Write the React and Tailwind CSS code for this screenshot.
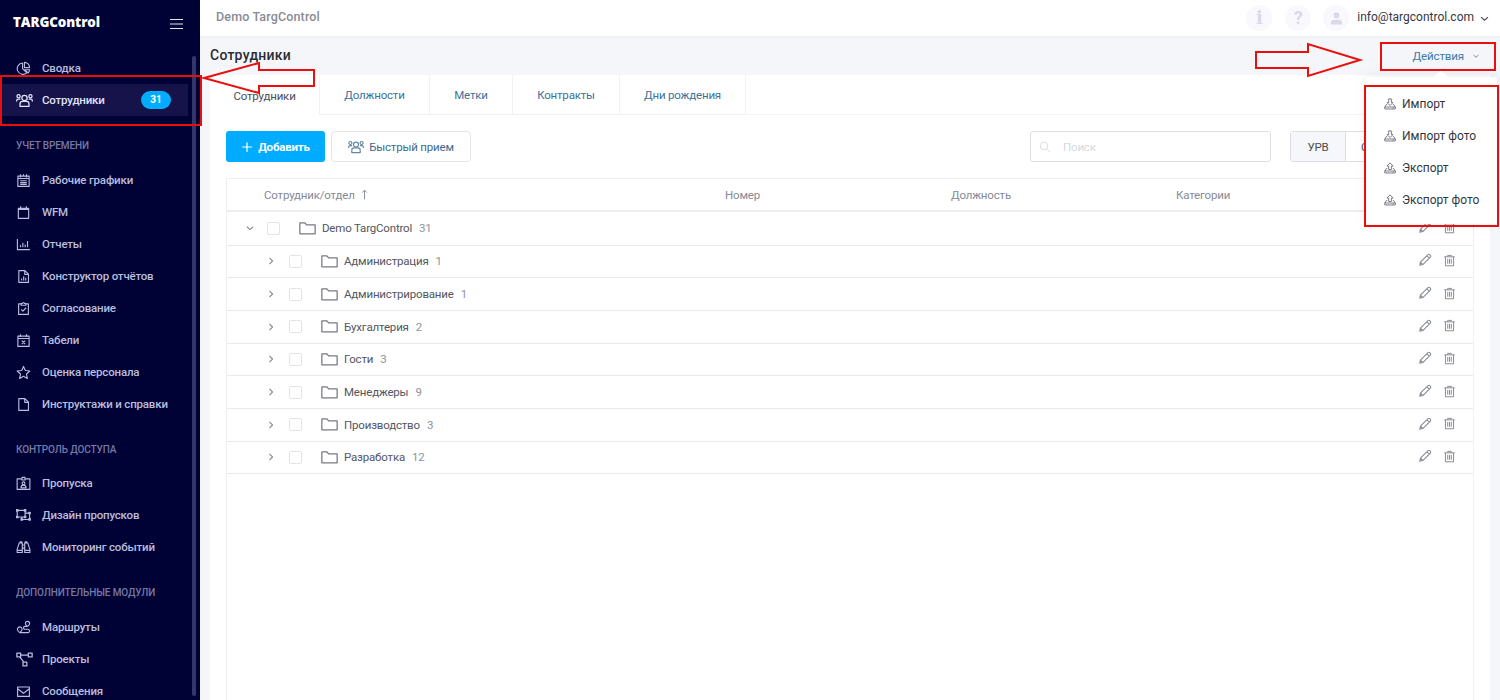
import React, { useState } from 'react';
import clsx from 'clsx';

// 16x16 line icons shared by the sidebar, the toolbar and the table
const ICONS = {
  pie: <><path d="M7 2.2A6 6 0 1 0 11.4 12.6L7 8.2z" /><path d="M9 1.5V7h5.5A5.5 5.5 0 0 0 9 1.5z" /><path d="M9.3 9.3h5.2a6 6 0 0 1-1.6 3.5z" /></>,
  users: <><circle cx="8" cy="5.6" r="2.5" /><circle cx="2.4" cy="4" r="1.5" /><circle cx="13.6" cy="4" r="1.5" /><path d="M3.8 13.6v-2.4c0-1.4.9-2.3 2.2-2.3h4c1.3 0 2.2.9 2.2 2.300v2.400zM.6 9V8.300c0-.9.7-1.600 1.600-1.600h1.900M15.400 9V8.300c0-.9-.7-1.600-1.600-1.600h-1.900" /></>,
  schedule: <path d="M2 3.3h12v11H2zM4.8 1.3v3.4M8 1.3v2M11.2 1.3v3.4M2 5.8h12M4.5 8.3h7M4.5 10.2h7M4.5 12.1h7" />,
  calendar: <path d="M2.5 3.6h11v10.6h-11zM2.5 4.6h11M5 1.4v3M11 1.4v3" />,
  chart: <path d="M1.5 2v11.500h13.300M4.800 11V8.500M7.300 11V6M9.800 11V8M12.300 11V4.200" />,
  fileChart: <path d="M3 1.7h6.5l3.8 3.8v8.8H3zM9.3 1.7v4h4M6 12.3v-2.2M8.2 12.3V7.6M10.4 12.3V9.2" />,
  clipboard: <path d="M5.5 3H2.8v11.3h10.4V3h-2.7M5.5 4.5V2.7h1.4a1.1 1.1 0 0 1 2.2 0h1.4v1.8zM5.5 9l1.8 1.8 3.5-3.6" />,
  calendarX: <path d="M2 3.3h12v11H2zM4.8 1.3v3M11.2 1.3v3M2 5.8h12M6.2 8.2l3.6 3.6M9.8 8.2l-3.6 3.6" />,
  star: <path d="M8 1.5l1.9 4.3 4.9.6-3.6 3.2.9 4.9L8 12.1l-4.1 2.4.9-4.9L1.2 6.4l4.9-.6z" />,
  file: <path d="M3 1.7h6.5l3.8 3.8v8.8H3zM9.3 1.7v4h4" />,
  badge: <><path d="M6 3H1.200v11.300h13.600V3H10M6.400 1.500h3.200v2.800H6.400z" /><circle cx="8" cy="7.7" r="1.5" /><path d="M5.3 12.7c0-2 1-3 2.7-3s2.7 1 2.7 3z" /></>,
  objects: <path d="M1.3 2.6h8.4v7H1.3zM9.7 5.4h4.8v6.8H6.2V9.6M.5 1.8h1.6v1.6H.5zM8.9 1.8h1.6v1.6H8.9zM.5 8.8h1.6v1.6H.5zM8.9 8.8h1.6v1.6H8.9zM13.7 4.6h1.6v1.6h-1.6zM13.7 11.4h1.6V13h-1.6zM5.4 11.4H7V13H5.4z" />,
  binoculars: <path d="M3.5 3.1h3.2v10.2H1.2V10zM12.5 3.1H9.3v10.2h5.5V10zM6.7 5.3h2.6M6.7 8.7h2.6M1.2 11h5.5M9.3 11h5.5M4 1.8h2.2v1.3M12 1.8H9.8v1.3" />,
  route: <><path d="M4 13.5S1.5 11.7 1.5 9.8a2.5 2.5 0 0 1 5 0C6.5 11.7 4 13.5 4 13.5zM12.3 6.8S10 5.3 10 3.7a2.3 2.3 0 0 1 4.6 0c0 1.6-2.3 3.1-2.3 3.1z" /><path d="M12.3 6.8H9.5a1.5 1.5 0 0 0 0 3h3a1.8 1.8 0 0 1 0 3.7H4M4 9.7h.2M12.3 3.6h.2" /></>,
  project: <path d="M.8 2h3.6v3.6H.8zM11.6 2h3.6v3.6h-3.6zM6.6 10.4h3.6V14H6.6zM4.4 3.8h7.2M3.4 5.6l4 4.8" />,
  mail: <path d="M1.7 3.2h12.6v10H1.7zM1.7 5l6.3 4.8L14.3 5" />,
  folder: <path d="M.8 13V2.8h4.8l1.6 1.8h8V13z" />,
  pencil: <path d="M2 14l.8-3.500 8.600-8.600c.6-.6 1.400-.6 2 0l.7.7c.6.6.6 1.400 0 2l-8.600 8.600zM10.200 3.200l2.700 2.700M2.800 10.500l2.700 2.700" />,
  trash: <path d="M1.5 3.5h13M3 3.5v11h10v-11M5.7 3.3V1.7h4.6v1.6M5.8 6v6M8 6v6M10.2 6v6" />,
  import: <path d="M6.2 1.2h3.6V6h2.3L8 10 3.900 6h2.300zM4.300 8.800H3L1 12v2.600h14V12l-2-3.200h-1.300M1 12h14M11.500 13.300h1.500" />,
  export: <path d="M6.2 10h3.6V5.400h2.300L8 1.200 3.900 5.400h2.300zM4.300 8.800H3L1 12v2.600h14V12l-2-3.200h-1.300M1 12h14M11.500 13.300h1.500" />,
  search: <><circle cx="6.7" cy="6.7" r="5" /><path d="M10.4 10.4l4.2 4.2" /></>,
  plus: <path d="M8 1.5v13M1.5 8h13" strokeWidth="1.6" />,
  down: <path d="M3 6l5 4.5L13 6" strokeWidth="1.7" />,
  right: <path d="M5.5 3l5 5-5 5" strokeWidth="1.7" />,
  up: <path d="M8 15V2M4.5 5.2L8 1.7l3.5 3.5" strokeWidth="1.4" />,
};

const Icon = ({ name, className }) => (
  <svg viewBox="0 0 16 16" fill="none" stroke="currentColor" strokeWidth="1.2" strokeLinejoin="round" className={clsx('shrink-0', className)}>
    {ICONS[name]}
  </svg>
);

const SECTIONS = [
  {
    items: [
      { icon: 'pie', label: 'Сводка' },
      { icon: 'users', label: 'Сотрудники', count: 31 },
    ],
  },
  {
    title: 'УЧЕТ ВРЕМЕНИ',
    headClass: 'h-12',
    items: [
      { icon: 'schedule', label: 'Рабочие графики' },
      { icon: 'calendar', label: 'WFM' },
      { icon: 'chart', label: 'Отчеты' },
      { icon: 'fileChart', label: 'Конструктор отчётов' },
      { icon: 'clipboard', label: 'Согласование' },
      { icon: 'calendarX', label: 'Табели' },
      { icon: 'star', label: 'Оценка персонала' },
      { icon: 'file', label: 'Инструктажи и справки' },
    ],
  },
  {
    title: 'КОНТРОЛЬ ДОСТУПА',
    headClass: 'h-[47px]',
    items: [
      { icon: 'badge', label: 'Пропуска' },
      { icon: 'objects', label: 'Дизайн пропусков' },
      { icon: 'binoculars', label: 'Мониторинг событий' },
    ],
  },
  {
    title: 'ДОПОЛНИТЕЛЬНЫЕ МОДУЛИ',
    headClass: 'h-12',
    items: [
      { icon: 'route', label: 'Маршруты' },
      { icon: 'project', label: 'Проекты' },
      { icon: 'mail', label: 'Сообщения' },
    ],
  },
];

const TABS = [
  { label: 'Сотрудники', width: 'w-[110px]' },
  { label: 'Должности', width: 'w-[110px]' },
  { label: 'Метки', width: 'w-[83px]' },
  { label: 'Контракты', width: 'w-[107px]' },
  { label: 'Дни рождения', width: 'w-[126px]' },
];

const DEPARTMENTS = [
  { name: 'Администрация', count: 1 },
  { name: 'Администрирование', count: 1 },
  { name: 'Бухгалтерия', count: 2 },
  { name: 'Гости', count: 3 },
  { name: 'Менеджеры', count: 9 },
  { name: 'Производство', count: 3 },
  { name: 'Разработка', count: 12 },
];

const ACTIONS = [
  { icon: 'import', label: 'Импорт' },
  { icon: 'import', label: 'Импорт фото' },
  { icon: 'export', label: 'Экспорт' },
  { icon: 'export', label: 'Экспорт фото' },
];

const Sidebar = () => (
  <aside className="flex h-full w-[200px] shrink-0 flex-col bg-[#000236] text-[#b9bddd]">
    <div className="flex h-[52px] shrink-0 items-start justify-between pl-[13px] pr-[17px] pt-[13px]">
      <span className="font-['Open_Sans'] text-[13.4px] font-extrabold leading-[18px] tracking-[-0.1px] text-white">TARGControl</span>
      <svg viewBox="0 0 13 12" className="mt-[5px] h-3 w-[13px]" stroke="#e4e5f2" strokeWidth="1.2">
        <path d="M0 1.5h13M0 6h13M0 10.5h13" />
      </svg>
    </div>
    <div className="flex min-h-0 flex-1">
      <nav className="w-[188px] overflow-hidden">
        {SECTIONS.map((section) => (
          <div key={section.items[0].label}>
            {section.title && (
              <div className={clsx('whitespace-nowrap pl-4 pt-[23px] text-[10px] font-medium leading-[14px] tracking-[-0.1px] text-[#7779a4]', section.headClass)}>{section.title}</div>
            )}
            {section.items.map((item) => (
              <a
                key={item.label}
                className={clsx('flex h-8 items-center pl-4 text-[11.5px] font-medium leading-[18px] tracking-[-0.18px]', item.count && 'bg-[#15134a] text-[#e0e2f8]')}
              >
                <Icon name={item.icon} className={item.icon === 'users' || item.icon === 'project' ? 'h-[17px] w-[17px]' : 'h-[15px] w-[15px]'} />
                <span className={clsx('whitespace-nowrap', item.icon === 'users' || item.icon === 'project' ? 'ml-[9px]' : 'ml-[11px]')}>{item.label}</span>
                {item.count && (
                  <span className="ml-auto mr-[17px] flex h-[18px] w-[30px] items-center justify-center rounded-full bg-[#00acff] text-[10px] font-bold tracking-normal text-white">{item.count}</span>
                )}
              </a>
            ))}
          </div>
        ))}
      </nav>
      <div className="mb-1 ml-1 mt-1 w-1 rounded-full bg-[#34376a]" />
    </div>
  </aside>
);

const RoundButton = ({ children }) => (
  <span className="flex h-[26px] w-[26px] items-center justify-center rounded-full bg-[#f8f8fd] text-[#d9d9e9]">{children}</span>
);

const TopBar = () => (
  <header className="flex h-9 shrink-0 items-center bg-white pl-4 pr-[10px] shadow-[0_0_4px_rgba(80,90,130,0.10)]">
    <span className="pb-px text-[12.5px] font-medium tracking-[0.15px] text-[#8a8b93]">Demo TargControl</span>
    <div className="ml-auto flex items-center">
      <RoundButton><span className="font-['DejaVu_Serif'] text-[18px] font-bold leading-none">i</span></RoundButton>
      <span className="w-[13px]" />
      <RoundButton><span className="text-[18px] font-bold leading-none">?</span></RoundButton>
      <span className="w-3" />
      <RoundButton>
        <svg viewBox="0 0 14 14" className="h-[13px] w-[13px]" fill="currentColor">
          <circle cx="7" cy="3.6" r="3.2" />
          <path d="M1 13.5v-2C1 9.3 3 8.3 4.5 8.3h5C11 8.3 13 9.3 13 11.5v2z" />
        </svg>
      </RoundButton>
      <span className="ml-2 pb-[2px] text-[12px] leading-[18px] text-[#37383f]">info@targcontrol.com</span>
      <Icon name="down" className="ml-[5px] h-[11px] w-[11px] text-[#4c4d55]" />
    </div>
  </header>
);

const RowActions = () => (
  <div className="mb-[2px] ml-auto flex items-center gap-[11px] pr-[17px] text-[#868a93]">
    <Icon name="pencil" className="h-[14px] w-[14px]" />
    <Icon name="trash" className="h-[13px] w-[13px]" />
  </div>
);

const Checkbox = () => <span className="h-[13px] w-[13px] rounded-[2px] border border-[#e2e4e6] bg-white" />;

const Table = () => (
  <div className="flex min-h-0 flex-1 flex-col border-x border-t border-[#eff0f2] text-[11.5px] leading-[18px] tracking-[-0.18px]">
    <div className="flex h-[33px] shrink-0 items-center border-b-2 border-[#eceef0] text-[#868a96]">
      <span className="flex w-[498px] items-center pl-[37px]">
        Сотрудник/отдел
        <Icon name="up" className="ml-1 h-[11px] w-[11px]" />
      </span>
      <span className="w-[226px]">Номер</span>
      <span className="w-[225px]">Должность</span>
      <span>Категории</span>
    </div>
    <div className="flex h-[33.5px] shrink-0 items-center border-b border-[#e8eaec] pl-[18px] text-[#53565f]">
      <Icon name="down" className="h-[10px] w-[10px] text-[#868a93]" />
      <span className="ml-3 flex"><Checkbox /></span>
      <Icon name="folder" className="ml-[19px] h-[17px] w-[17px] text-[#777b84]" />
      <span className="ml-[6px]">Demo TargControl</span>
      <span className="ml-[7px] text-[#8f929b]">31</span>
      <RowActions />
    </div>
    {DEPARTMENTS.map((dep) => (
      <div key={dep.name} className="flex h-[32.7px] shrink-0 items-center border-b border-[#e8eaec] pl-[39px] text-[#53565f]">
        <Icon name="right" className="h-[10px] w-[10px] text-[#868a93]" />
        <span className="ml-[13px] flex"><Checkbox /></span>
        <Icon name="folder" className="ml-[19px] h-[17px] w-[17px] text-[#777b84]" />
        <span className="ml-[6px]">{dep.name}</span>
        <span className="ml-[7px] text-[#8f929b]">{dep.count}</span>
        <RowActions />
      </div>
    ))}
  </div>
);

const ActionsMenu = () => (
  <div className="absolute left-[1366px] top-[77px] h-[147px] w-[131px] rounded-[3px] bg-white pt-[11px] text-[12px] leading-[18px] text-[#34363e] shadow-[0_0_12px_rgba(70,80,130,0.12)]">
    <svg viewBox="0 0 16 8" className="absolute -top-[7px] left-[67px] h-2 w-4" fill="#fff"><path d="M0 8L8 0l8 8z" /></svg>
    {ACTIONS.map((action) => (
      <div key={action.label} className="flex h-8 items-center whitespace-nowrap pl-[18px]">
        <Icon name={action.icon} className="mr-[6px] h-3 w-3 text-[#6d7078]" />
        {action.label}
      </div>
    ))}
  </div>
);

// Red frames and arrows that point at the menu entries
const Callouts = () => (
  <svg viewBox="0 0 1500 700" className="pointer-events-none absolute inset-0 h-[700px] w-[1500px]" fill="none" stroke="#ea0e0c" strokeWidth="2">
    <path d="M1 76h200v49H1z" />
    <path d="M204 78l55-15v7h55v16h-55v7z" />
    <path d="M1256 52h52v-8l52 16-52 16v-8h-52z" />
    <path d="M1381 43h114v27h-114z" />
    <path d="M1365 86h133v140h-133z" />
  </svg>
);

export default function App() {
  const [tab, setTab] = useState(0);

  return (
    <div className="relative flex h-[700px] w-[1500px] overflow-hidden bg-[#f5f6fa] font-[Roboto,sans-serif]">
      <Sidebar />
      <main className="flex min-w-0 flex-1 flex-col">
        <TopBar />
        <div className="flex h-[39px] shrink-0 items-center justify-between pl-[10px] pr-[20px]">
          <h1 className="text-[14px] font-medium tracking-[0.25px] text-[#2b2c33]">Сотрудники</h1>
          <button className="flex items-center text-[11.5px] leading-[18px] tracking-[-0.12px] text-[#3a7ba8]">
            Действия
            <Icon name="down" className="ml-2 h-2 w-2 text-[#777b84]" />
          </button>
        </div>
        <section className="mx-[10px] flex min-h-0 flex-1 flex-col bg-white">
          <div className="flex h-10 shrink-0 text-[11.5px] leading-[18px]">
            {TABS.map((t, i) => (
              <button
                key={t.label}
                onClick={() => setTab(i)}
                className={clsx(
                  'shrink-0 border-r border-[#f0f1f4] pt-px tracking-[-0.18px]',
                  t.width,
                  i === tab ? 'text-[#4b4d56]' : 'border-b text-[#3d7199]'
                )}
              >
                {t.label}
              </button>
            ))}
            <div className="flex-1 border-b border-[#f3f4f6]" />
          </div>
          <div className="flex min-h-0 flex-1 flex-col px-4 pt-4">
            <div className="flex h-[31px] shrink-0 items-center text-[11.5px] leading-[18px]">
              <button className="flex h-[31px] w-[99px] items-center justify-center rounded-[3px] bg-[#00acff] font-bold tracking-[-0.2px] text-white">
                <Icon name="plus" className="mr-[5px] h-3 w-3" />
                Добавить
              </button>
              <button className="ml-[6px] flex h-[31px] w-[140px] items-center justify-center rounded-[4px] border border-[#e3e5ea] tracking-[-0.18px] text-[#3d6a8f]">
                <Icon name="users" className="mr-[5px] h-4 w-4 text-[#6487a5]" />
                Быстрый прием
              </button>
              <div className="ml-auto flex h-[31px] w-[241px] items-center rounded-[3px] border border-[#dddfe4] pl-2 tracking-[-0.18px] text-[#d6d9e0]">
                <Icon name="search" className="mr-3 h-3 w-3" />
                Поиск
              </div>
              <div className="ml-[19px] flex h-[31px] w-[184px] overflow-hidden rounded-[3px] border border-[#dddfe4] tracking-[-0.18px] text-[#4b4d56]">
                <span className="flex w-[55px] items-center justify-center border-r border-[#dddfe4] bg-[#f5f7fa]">УРВ</span>
                <span className="flex items-center pl-[15px]">СКУД</span>
              </div>
            </div>
            <div className="h-4 shrink-0" />
            <Table />
          </div>
        </section>
      </main>
      <ActionsMenu />
      <Callouts />
    </div>
  );
}
